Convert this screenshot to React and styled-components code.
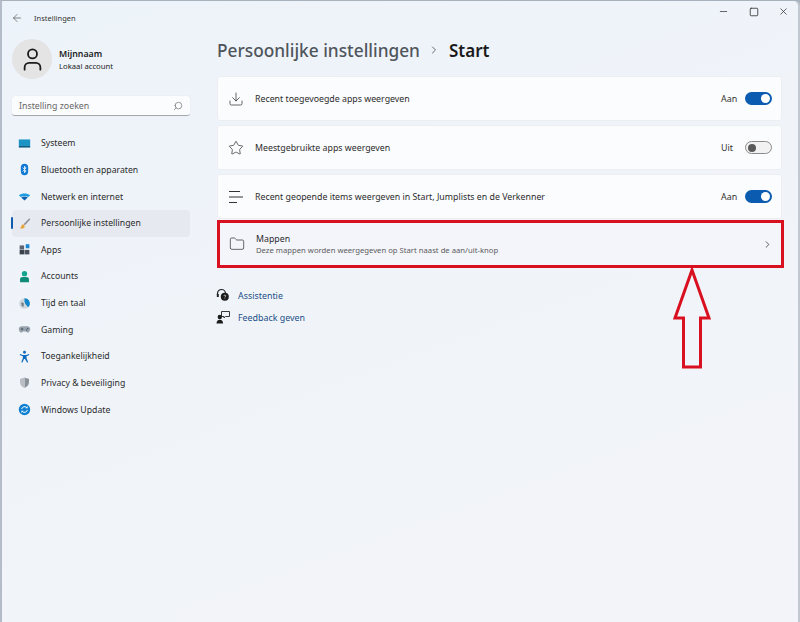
import React from "react";
import styled, { createGlobalStyle } from "styled-components";
import { ArrowLeft, ChevronRight, Download, Folder, Minus, Search, Square, Star, User, X } from "lucide-react";

const Global = createGlobalStyle`
  html, body { margin: 0; padding: 0; background: #a9b3bf; }
  * { box-sizing: border-box; }
`;

const navIcons = {
  system: (
    <svg viewBox="0 0 16 16">
      <rect x="1" y="3" width="14" height="8" fill="#1b93c4" />
      <rect x="1" y="11" width="14" height="2" fill="#0d5d80" />
    </svg>
  ),
  bluetooth: (
    <svg viewBox="0 0 16 16">
      <rect x="3.5" y="1" width="9" height="14" rx="4.5" fill="#0f78d4" />
      <path d="M5.8 5.6 10 9.9 8 12V4l2 2.1-4.2 4.3" fill="none" stroke="#fff" strokeWidth="1" />
    </svg>
  ),
  wifi: (
    <svg viewBox="0 0 16 16">
      <path d="M1 6.5C5 3.500 11 3.500 15 6.500L12.600 8.700C10 6.800 6 6.800 3.400 8.700Z" fill="#1d9be0" />
      <path d="M3.900 9.200C6.300 7.500 9.700 7.500 12.100 9.200L8 13Z" fill="#0c62b0" />
    </svg>
  ),
  brush: (
    <svg viewBox="0 0 16 16">
      <path d="M14 1.500 7 8.500l1.500 1.500L15 3Z" fill="#8d8f94" />
      <path d="M6.500 9C4.500 9 4.500 11 3.800 12.300 3.400 13 2.500 13.300 2 13.500c2 1.200 5 1 6-.8.500-1 .3-2-.3-2.700Z" fill="#e8a13c" />
    </svg>
  ),
  apps: (
    <svg viewBox="0 0 16 16">
      <rect x="2" y="3" width="5.500" height="5" fill="#5d6470" />
      <rect x="2" y="8.500" width="5.500" height="5.500" fill="#3c424c" />
      <rect x="8" y="8.500" width="6" height="5.500" fill="#4a505a" />
      <rect x="9.500" y="1.500" width="4.500" height="5" fill="#1a86d0" />
    </svg>
  ),
  accounts: (
    <svg viewBox="0 0 16 16">
      <circle cx="8" cy="4.500" r="3.300" fill="#14a58e" />
      <path d="M2.500 15v-3.500C2.500 9.500 4 8.500 6 8.500h4c2 0 3.500 1 3.500 3V15Z" fill="#0f8c78" />
    </svg>
  ),
  time: (
    <svg viewBox="0 0 16 16">
      <circle cx="8" cy="8" r="6.500" fill="#cfd6dc" />
      <path d="M8 1.500A6.500 6.500 0 0 1 12.500 12.700C11 10 8.500 9 8 5.500Z" fill="#0f86c9" />
      <path d="M4 6.500l3 1v4.500L4.500 11Z" fill="#6f7a84" />
    </svg>
  ),
  gaming: (
    <svg viewBox="0 0 16 16">
      <path d="M4.500 4h7c2 0 3.500 1.500 3.500 3.500 0 2.500-1.500 4.500-3 4.500-1 0-1.500-1.500-2.500-1.500h-3C5.500 10.500 5 12 4 12c-1.500 0-3-2-3-4.500C1 5.500 2.500 4 4.500 4Z" fill="#98a3ad" />
      <path d="M3.500 7.500h3M5 6v3" stroke="#3f4a55" strokeWidth="0.900" />
      <circle cx="10.500" cy="8.500" r="0.800" fill="#3f4a55" />
      <circle cx="12" cy="7" r="0.800" fill="#3f4a55" />
    </svg>
  ),
  access: (
    <svg viewBox="0 0 16 16">
      <circle cx="8" cy="2.800" r="1.800" fill="#0f6cbd" />
      <path d="M2.500 5 6 6.200h4L13.500 5l.4 1.300-3.400 1.500.1 2.200 1.900 5-1.400.5L8.600 11h-1.200l-2 4.500-1.400-.5 1.900-5 .1-2.200L2.100 6.300Z" fill="#0f6cbd" />
    </svg>
  ),
  privacy: (
    <svg viewBox="0 0 16 16">
      <path d="M8 1.500c1.500 1.200 3.500 1.800 5.500 1.800V8c0 3-2.500 5.500-5.500 6.800Z" fill="#8a9299" />
      <path d="M8 1.500C6.500 2.700 4.500 3.300 2.500 3.300V8c0 3 2.500 5.500 5.500 6.800Z" fill="#b8bec4" />
    </svg>
  ),
  update: (
    <svg viewBox="0 0 16 16">
      <circle cx="8" cy="8" r="7" fill="#0f7fd2" />
      <path d="M4.500 7.500A3.600 3.600 0 0 1 11 6M11.500 8.500A3.600 3.600 0 0 1 5 10" fill="none" stroke="#fff" strokeWidth="1.200" />
      <path d="M11.800 3.800v2.800H9ZM4.200 12.200V9.400H7Z" fill="#fff" />
    </svg>
  ),
};

const navItems = [
  ["system", "Systeem"],
  ["bluetooth", "Bluetooth en apparaten"],
  ["wifi", "Netwerk en internet"],
  ["brush", "Persoonlijke instellingen", true],
  ["apps", "Apps"],
  ["accounts", "Accounts"],
  ["time", "Tijd en taal"],
  ["gaming", "Gaming"],
  ["access", "Toegankelijkheid"],
  ["privacy", "Privacy & beveiliging"],
  ["update", "Windows Update"],
];

const ListIcon = () => (
  <svg width="16" height="16" viewBox="0 0 16 16" fill="none" stroke="#333" strokeWidth="1">
    <path d="M1 2.500h11M1 8h14M1 13.500h8" />
  </svg>
);

const HelpIcon = () => (
  <svg width="14" height="14" viewBox="0 0 14 14">
    <path d="M1.500 7V5.500a4 4 0 0 1 8 0" fill="none" stroke="#222" strokeWidth="1.200" />
    <rect x="0.800" y="6" width="2" height="3" fill="#222" />
    <circle cx="8.800" cy="8.800" r="4" fill="#1c1c1c" />
    <path d="M7.800 7.800c.3-1 2-.9 2 .1 0 .7-1 .7-1 1.500M8.800 10.400v.5" fill="none" stroke="#fff" strokeWidth="0.700" />
  </svg>
);

const FeedbackIcon = () => (
  <svg width="14" height="14" viewBox="0 0 14 14">
    <path d="M5.500 1.500h8v5h-4L8 8V6.500H5.500Z" fill="none" stroke="#222" strokeWidth="0.900" />
    <circle cx="3.800" cy="7" r="2.200" fill="#1c1c1c" />
    <path d="M0.500 13.500c0-2.500 1.300-3.800 3.300-3.800s3.300 1.300 3.300 3.800Z" fill="#1c1c1c" />
  </svg>
);

const Toggle = ({ on }) => (
  <ToggleTrack $on={on}>
    <ToggleKnob $on={on} />
  </ToggleTrack>
);

export default function App() {
  return (
    <Window>
      <Global />
      <TitleBar>
        <BackButton>
          <ArrowLeft size={12} strokeWidth={1.400} color="#555" />
        </BackButton>
        <AppName>Instellingen</AppName>
        <WindowButtons>
          <Minus size={11} strokeWidth={1.600} color="#333" />
          <Square size={10} strokeWidth={2} color="#333" />
          <X size={11} strokeWidth={1.600} color="#333" />
        </WindowButtons>
      </TitleBar>
      <Body>
        <Sidebar>
          <Profile>
            <Avatar>
              <User size={27} strokeWidth={1.600} color="#1c1c1c" />
            </Avatar>
            <ProfileText>
              <ProfileName>Mijnnaam</ProfileName>
              <ProfileType>Lokaal account</ProfileType>
            </ProfileText>
          </Profile>
          <SearchBox>
            <SearchText>Instelling zoeken</SearchText>
            <Search size={10} strokeWidth={1.400} color="#555" style={{ transform: "scaleX(-1)" }} />
          </SearchBox>
          <Nav>
            {navItems.map(([icon, label, active]) => (
              <NavItem key={label} $active={active}>
                {navIcons[icon]}
                <span>{label}</span>
              </NavItem>
            ))}
          </Nav>
        </Sidebar>
        <Main>
          <Breadcrumb>
            <Parent>Persoonlijke instellingen</Parent>
            <ChevronRight size={12} strokeWidth={1.600} color="#444" />
            <Current>Start</Current>
          </Breadcrumb>
          <Cards>
            <Card>
              <Download size={16} strokeWidth={1.100} color="#333" />
              <CardLabel>Recent toegevoegde apps weergeven</CardLabel>
              <State>Aan</State>
              <Toggle on />
            </Card>
            <Card>
              <Star size={16} strokeWidth={1.100} color="#333" />
              <CardLabel>Meestgebruikte apps weergeven</CardLabel>
              <State>Uit</State>
              <Toggle />
            </Card>
            <Card>
              <ListIcon />
              <CardLabel>Recent geopende items weergeven in Start, Jumplists en de Verkenner</CardLabel>
              <State>Aan</State>
              <Toggle on />
            </Card>
            <Highlighted>
              <Folder size={16} strokeWidth={1.100} color="#333" />
              <CardText>
                <CardLabel>Mappen</CardLabel>
                <CardHint>Deze mappen worden weergegeven op Start naast de aan/uit-knop</CardHint>
              </CardText>
              <ChevronRight size={11} strokeWidth={1.700} color="#333" />
              <Arrow width="40" height="104" viewBox="0 0 40 104">
                <path d="M20 3 37 51H28.500V100H11.500V51H3Z" fill="none" stroke="#d9101f" strokeWidth="3" />
              </Arrow>
            </Highlighted>
          </Cards>
          <Links>
            <LinkRow>
              <HelpIcon />
              <LinkText>Assistentie</LinkText>
            </LinkRow>
            <LinkRow>
              <FeedbackIcon />
              <LinkText>Feedback geven</LinkText>
            </LinkRow>
          </Links>
        </Main>
      </Body>
    </Window>
  );
}

const Window = styled.div`
  width: 800px;
  height: 622px;
  display: flex;
  flex-direction: column;
  overflow: hidden;
  background: linear-gradient(160deg, #edf3fa 0%, #f0f4f9 50%, #f3f4fa 100%);
  border-top: 1px solid #a8b2bd;
  border-left: 2px solid #b3bcc8;
  border-right: 2px solid #c2c8d0;
  border-top-right-radius: 6px;
  font-family: "Noto Sans", "Open Sans", sans-serif;
  color: #1b1b1b;
`;

const TitleBar = styled.div`
  height: 33px;
  flex: none;
  display: flex;
  align-items: center;
  padding-left: 9px;
`;

const BackButton = styled.div`
  width: 12px;
  height: 12px;
  display: flex;
  margin-right: 11px;
`;

const AppName = styled.div`
  font-size: 7.500px;
  color: #333;
`;

const WindowButtons = styled.div`
  margin-left: auto;
  align-self: flex-start;
  width: 80px;
  padding: 5px 9px 0 0;
  display: flex;
  justify-content: space-between;
  align-items: center;
`;

const Body = styled.div`
  flex: 1;
  display: flex;
`;

const Sidebar = styled.aside`
  width: 188px;
  flex: none;
  padding-left: 10px;
`;

const Profile = styled.div`
  display: flex;
  align-items: center;
  gap: 7px;
  margin: 5px 0 0 0;
`;

const Avatar = styled.div`
  width: 40px;
  height: 40px;
  border-radius: 50%;
  background: #e4e4e4;
  display: flex;
  align-items: center;
  justify-content: center;
`;

const ProfileText = styled.div`
  padding-top: 2px;
`;

const ProfileName = styled.div`
  font-size: 8.800px;
  font-weight: 600;
  line-height: 13px;
`;

const ProfileType = styled.div`
  font-size: 7.700px;
  line-height: 11px;
`;

const SearchBox = styled.div`
  margin-top: 17px;
  width: 178px;
  height: 20px;
  background: #fbfcfe;
  border-radius: 3px;
  border-bottom: 1px solid #a5a9ad;
  box-shadow: 0 0 1px #d0d4da;
  display: flex;
  align-items: center;
  justify-content: space-between;
  padding: 0 7px;
`;

const SearchText = styled.span`
  font-size: 8.800px;
  color: #666;
`;

const Nav = styled.nav`
  margin-top: 14px;
  display: flex;
  flex-direction: column;
`;

const NavItem = styled.div`
  position: relative;
  width: 178px;
  height: 26.630px;
  padding-left: 6px;
  display: flex;
  align-items: center;
  gap: 10px;
  font-size: 8.700px;
  color: #2b2b2b;
  border-radius: 4px;
  background: ${(p) => (p.$active ? "#e6eaf0" : "transparent")};

  svg {
    width: 13px;
    height: 13px;
    flex: none;
  }

  &::before {
    content: "";
    display: ${(p) => (p.$active ? "block" : "none")};
    position: absolute;
    left: -1px;
    top: 7px;
    width: 2px;
    height: 12px;
    border-radius: 1px;
    background: #0f5cae;
  }
`;

const Main = styled.main`
  width: 565px;
  flex: none;
  margin-left: 27px;
`;

const Breadcrumb = styled.div`
  height: 42px;
  padding-bottom: 10px;
  display: flex;
  align-items: center;
  gap: 8.500px;
`;

const Parent = styled.span`
  font-size: 17.300px;
  font-weight: 500;
  color: #4f555b;
`;

const Current = styled.span`
  font-size: 17px;
  font-weight: 600;
  color: #1a1a1a;
`;

const Cards = styled.div`
  display: flex;
  flex-direction: column;
  gap: 4px;
`;

const Card = styled.div`
  height: 45px;
  padding: 0 9px 0 10px;
  display: flex;
  align-items: center;
  gap: 11px;
  background: #fbfcfe;
  border: 1px solid #eceef2;
  border-radius: 3px;
`;

const Highlighted = styled(Card)`
  position: relative;
  height: 48px;
  margin: -3px -2px 0 0;
  padding: 0 8px 0 9px;
  background: #f3f5fb;
  border: 3px solid #d9101f;
  border-radius: 0;
`;

const CardText = styled.div`
  flex: 1;
  display: flex;
  flex-direction: column;
`;

const CardLabel = styled.div`
  flex: 1;
  font-size: 8.800px;
  line-height: 12px;
  color: #2b2b2b;
`;

const CardHint = styled.div`
  font-size: 7.700px;
  line-height: 11px;
  color: #5c5c5c;
`;

const State = styled.span`
  width: 18px;
  font-size: 8.900px;
  color: #333;
  margin-right: -5px;
`;

const ToggleTrack = styled.div`
  width: 27px;
  height: 13px;
  border-radius: 7px;
  padding: 2px;
  display: flex;
  align-items: center;
  justify-content: ${(p) => (p.$on ? "flex-end" : "flex-start")};
  background: ${(p) => (p.$on ? "#0b5cb0" : "#f2f2f2")};
  border: ${(p) => (p.$on ? "none" : "1px solid #8a8a8a")};
`;

const ToggleKnob = styled.div`
  width: ${(p) => (p.$on ? "9px" : "8px")};
  height: ${(p) => (p.$on ? "9px" : "8px")};
  border-radius: 50%;
  background: ${(p) => (p.$on ? "#fff" : "#5a5a5a")};
`;

const Arrow = styled.svg`
  position: absolute;
  left: 452px;
  top: 44px;
`;

const Links = styled.div`
  margin: 20px 0 0 -1px;
  display: flex;
  flex-direction: column;
  gap: 8px;
`;

const LinkRow = styled.div`
  height: 14px;
  display: flex;
  align-items: center;
  gap: 8px;
`;

const LinkText = styled.span`
  font-size: 8.900px;
  color: #1d4f86;
`;
